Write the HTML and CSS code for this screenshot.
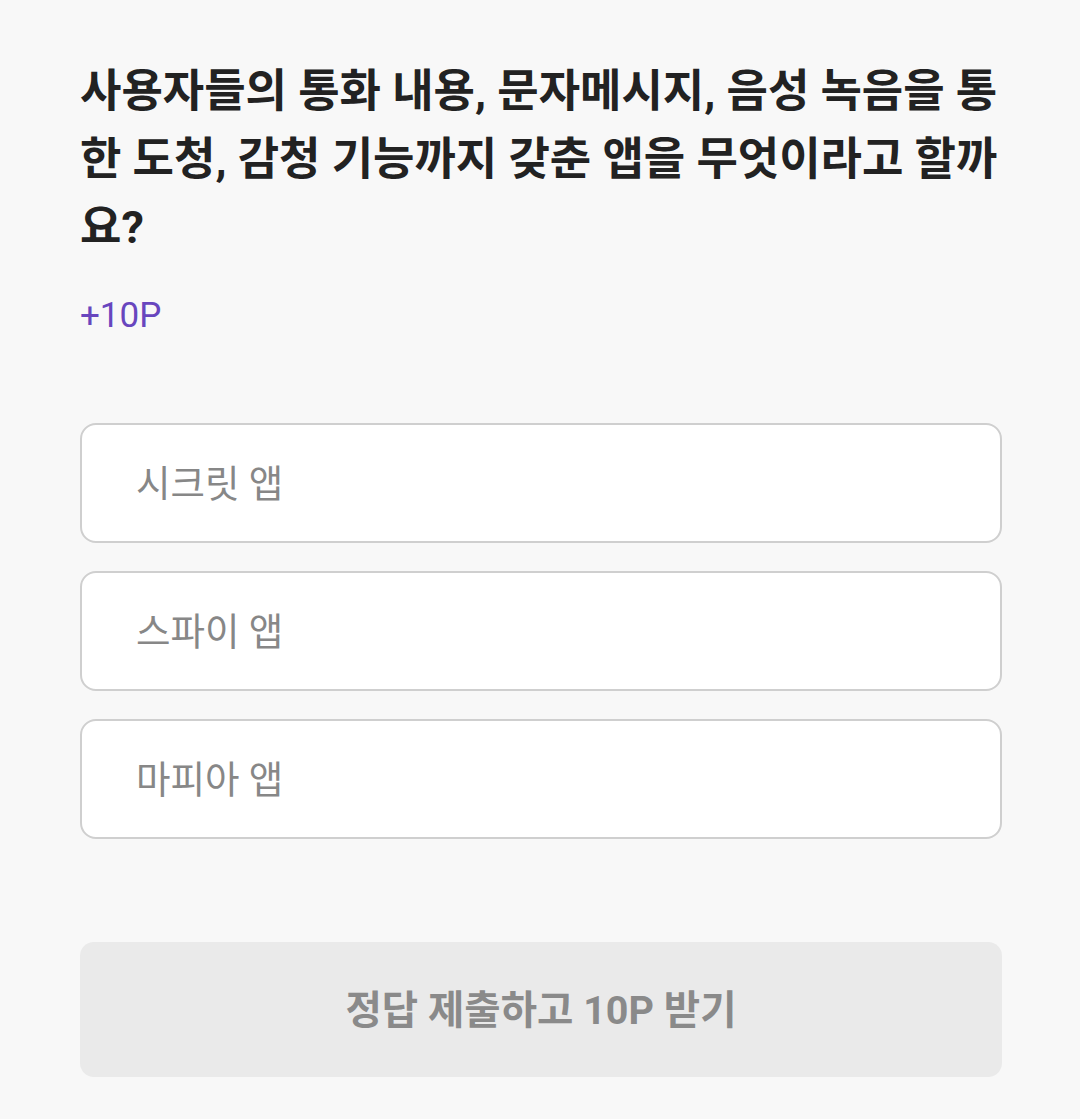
FILE: index.html
```html
<!DOCTYPE html>
<html lang="ko">
<head>
<meta charset="utf-8">
<link rel="stylesheet" href="styles.css">
</head>
<body>
<main class="quiz">
  <h1 class="question">사용자들의 통화 내용, 문자메시지, 음성 녹음을 통한 도청, 감청 기능까지 갖춘 앱을 무엇이라고 할까요?</h1>
  <div class="reward">+10P</div>
  <ul class="options">
    <li class="option">시크릿 앱</li>
    <li class="option">스파이 앱</li>
    <li class="option">마피아 앱</li>
  </ul>
  <button class="submit" type="button">정답 제출하고 10P 받기</button>
</main>
</body>
</html>
```
FILE: styles.css
```css
html, body {
  margin: 0;
  padding: 0;
  background: #f8f8f8;
}
body {
  font-family: Roboto, "Noto Sans CJK KR", sans-serif;
  width: 1080px;
  height: 1119px;
  overflow: hidden;
}
.quiz {
  padding: 58px 78px 0 80px;
  display: flex;
  flex-direction: column;
}
.question {
  margin: 0;
  font-size: 45px;
  line-height: 68px;
  font-weight: 700;
  color: #222222;
  word-break: break-all;
}
.reward {
  margin-top: 30px;
  font-size: 35px;
  line-height: 48px;
  color: #6846be;
}
.options {
  list-style: none;
  margin: 83px 0 0;
  padding: 0;
  display: flex;
  flex-direction: column;
  gap: 28px;
}
.option {
  box-sizing: border-box;
  height: 120px;
  border: 2px solid #cfcfcf;
  border-radius: 16px;
  background: #ffffff;
  padding: 0 0 5px 54px;
  display: flex;
  align-items: center;
  font-size: 37.5px;
  color: #878787;
}
.submit {
  margin-top: 103px;
  height: 135px;
  padding: 0 0 6px;
  border: 0;
  border-radius: 14px;
  background: #eaeaea;
  font-family: inherit;
  font-size: 39.5px;
  font-weight: 700;
  color: #8a8a8a;
}
```
